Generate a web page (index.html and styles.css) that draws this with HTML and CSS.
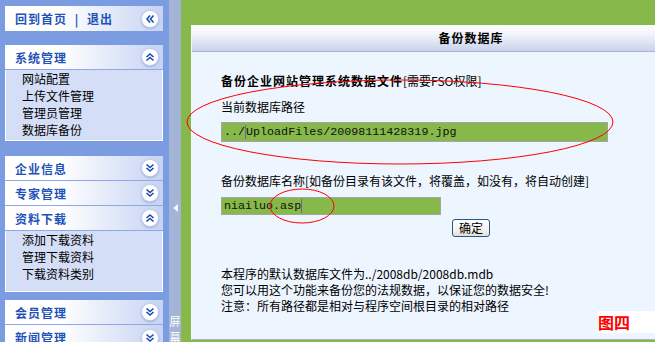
FILE: index.html
```html
<!DOCTYPE html>
<html lang="zh-CN">
<head>
  <meta charset="UTF-8">
  <title>备份数据库</title>
  <link rel="stylesheet" href="styles.css">
</head>
<body>

  <div class="page">
    <!-- left menu -->
    <div class="sidebar">
      <div class="menu-head menu-top">
        <span class="head-title">回到首页 <span class="sep">|</span> 退出</span>
        <span class="toggle">
          <svg viewBox="0 0 16 16"><path d="M8 4.5L5 8l3 3.5M11.5 4.5L8.5 8l3 3.5"/></svg>
        </span>
      </div>

      <div class="menu-group">
        <div class="menu-head">
          <span class="head-title">系统管理</span>
          <span class="toggle">
            <svg viewBox="0 0 16 16"><path d="M4.5 8L8 5l3.5 3M4.5 11.5L8 8.5l3.5 3"/></svg>
          </span>
        </div>
        <div class="menu-list">
          <div class="menu-item">网站配置</div>
          <div class="menu-item">上传文件管理</div>
          <div class="menu-item">管理员管理</div>
          <div class="menu-item">数据库备份</div>
        </div>
      </div>

      <div class="menu-group">
        <div class="menu-head">
          <span class="head-title">企业信息</span>
          <span class="toggle">
            <svg viewBox="0 0 16 16"><path d="M4.5 4.5L8 7.5l3.5-3M4.5 8L8 11l3.5-3"/></svg>
          </span>
        </div>
        <div class="menu-head">
          <span class="head-title">专家管理</span>
          <span class="toggle">
            <svg viewBox="0 0 16 16"><path d="M4.5 4.5L8 7.5l3.5-3M4.5 8L8 11l3.5-3"/></svg>
          </span>
        </div>
        <div class="menu-head">
          <span class="head-title">资料下载</span>
          <span class="toggle">
            <svg viewBox="0 0 16 16"><path d="M4.5 8L8 5l3.5 3M4.5 11.5L8 8.5l3.5 3"/></svg>
          </span>
        </div>
        <div class="menu-list menu-list-tall">
          <div class="menu-item">添加下载资料</div>
          <div class="menu-item">管理下载资料</div>
          <div class="menu-item">下载资料类别</div>
        </div>
      </div>

      <div class="menu-group menu-group-last">
        <div class="menu-head">
          <span class="head-title">会员管理</span>
          <span class="toggle">
            <svg viewBox="0 0 16 16"><path d="M4.5 4.5L8 7.5l3.5-3M4.5 8L8 11l3.5-3"/></svg>
          </span>
        </div>
        <div class="menu-head">
          <span class="head-title">新闻管理</span>
          <span class="toggle">
            <svg viewBox="0 0 16 16"><path d="M4.5 4.5L8 7.5l3.5-3M4.5 8L8 11l3.5-3"/></svg>
          </span>
        </div>
      </div>
    </div>

    <!-- splitter strip -->
    <div class="splitter">
      <span class="arrow-left"></span>
      <span class="screen-label">屏</span>
      <span class="screen-label">幕</span>
    </div>

    <!-- main area -->
    <div class="main-wrap">
      <div class="main-panel">
        <div class="panel-head">备份数据库</div>
        <div class="panel-body">
          <div class="form-title"><b>备份企业网站管理系统数据文件</b>[需要FSO权限]</div>
          <div class="field-label">当前数据库路径</div>
          <div class="text-input input-long">../<span class="caret"></span>UploadFiles/20098111428319.jpg</div>

          <div class="field-label field-label-gap">备份数据库名称[如备份目录有该文件，将覆盖，如没有，将自动创建]</div>
          <div class="text-input input-short">niailuo.asp<span class="caret"></span></div>
          <button class="btn-ok">确定</button>

          <div class="notes">
            <div class="note">本程序的默认数据库文件为../2008db/2008db.mdb</div>
            <div class="note">您可以用这个功能来备份您的法规数据，以保证您的数据安全!</div>
            <div class="note">注意：所有路径都是相对与程序空间根目录的相对路径</div>
          </div>
        </div>
      </div>
    </div>
  </div>

  <!-- annotations drawn on top of the screenshot -->
  <svg class="marks" viewBox="0 0 655 342">
    <ellipse cx="400" cy="122" rx="213" ry="42" />
    <ellipse cx="302" cy="206" rx="32" ry="17" />
  </svg>
  <div class="fig-label">图四</div>

</body>
</html>
```

FILE: styles.css
```css
body {
  margin: 0;
  width: 655px;
  height: 342px;
  overflow: hidden;
  position: relative;
  font-family: "Noto Sans CJK SC", "Liberation Sans", sans-serif;
  font-size: 12px;
  color: #000;
}

.page {
  display: flex;
  height: 342px;
}

/* ---- sidebar ---- */

.sidebar {
  width: 164px;
  flex-shrink: 0;
  background: #7b9ce1;
  padding: 6px 0 0 5px;
  display: flex;
  flex-direction: column;
}

.menu-head {
  width: 158px;
  height: 25px;
  flex-shrink: 0;
  box-sizing: border-box;
  display: flex;
  align-items: center;
  justify-content: space-between;
  padding: 0 5px 0 10px;
  background: linear-gradient(to right, #ffffff 0%, #ffffff 35%, #c6d3f3 100%);
  border-bottom: 1px solid #8fa8e6;
}

.menu-head:last-child {
  border-bottom: none;
}

.menu-top {
  margin-bottom: 14px;
  border-bottom: none;
}

.head-title {
  color: #1f52b8;
  font-weight: bold;
  font-size: 12px;
  letter-spacing: 1px;
  line-height: 25px;
}

.sep {
  margin: 0 4px;
}

.toggle {
  width: 16px;
  height: 16px;
  border-radius: 50%;
  background: #fff;
  box-shadow: 0 0 0 1px #c3cfee, 0 1px 3px rgba(50, 70, 140, 0.55);
  display: flex;
  align-items: center;
  justify-content: center;
}

.toggle svg {
  width: 16px;
  height: 16px;
  fill: none;
  stroke: #1c4cae;
  stroke-width: 1.6;
}

.menu-group {
  margin-bottom: 15px;
}

.menu-group-last {
  margin-top: -7px;
}

.menu-list {
  width: 158px;
  box-sizing: border-box;
  background: #d5def7;
  border: 1px solid #fff;
  border-top: none;
  padding: 0 0 2px 16px;
}

.menu-list-tall {
  padding-bottom: 9px;
}

.menu-item {
  line-height: 17px;
  height: 17px;
}

/* ---- splitter ---- */

.splitter {
  width: 12px;
  flex-shrink: 0;
  background: #a3b4d6;
  display: flex;
  flex-direction: column;
  align-items: center;
}

.arrow-left {
  margin-top: 204px;
  width: 0;
  height: 0;
  border-top: 4px solid transparent;
  border-bottom: 4px solid transparent;
  border-right: 5px solid #f4f7ff;
}

.screen-label {
  color: #fff;
  font-size: 11px;
  line-height: 16px;
  height: 16px;
  flex-shrink: 0;
}

.arrow-left + .screen-label {
  margin-top: 101px;
}

/* ---- main ---- */

.main-wrap {
  flex: 1;
  background: #86b84a;
  padding: 25px 0 0 10px;
  overflow: hidden;
}

.main-panel {
  width: 558px;
  height: 314px;
  background: #edf5fe;
  border-left: 1px solid #f4f8ff;
  border-bottom: 1px solid #a3b4d6;
}

.panel-head {
  height: 26px;
  line-height: 26px;
  text-align: center;
  font-weight: bold;
  font-size: 12px;
  letter-spacing: 1px;
  background: linear-gradient(to bottom, #ffffff 0%, #f1f4fb 35%, #c9d3ea 100%);
  border-bottom: 1px solid #a3b4d6;
}

.panel-body {
  padding: 21px 0 0 29px;
}

.form-title {
  line-height: 16px;
}

.form-title b {
  letter-spacing: 1px;
}

.field-label {
  margin-top: 10px;
  line-height: 16px;
}

.field-label-gap {
  margin-top: 31px;
}

.text-input {
  box-sizing: border-box;
  background: #86b84a;
  border: 1px solid #a5a5a5;
  font-family: "Liberation Mono", "DejaVu Sans Mono", monospace;
  font-size: 11.7px;
  color: #111;
  padding-left: 2px;
  display: flex;
  align-items: center;
}

.input-long {
  width: 387px;
  height: 20px;
  margin-top: 7px;
}

.input-short {
  width: 220px;
  height: 18px;
  margin-top: 8px;
}

.caret {
  display: inline-block;
  width: 1px;
  height: 14px;
  background: #6a6a9a;
}

.btn-ok {
  display: block;
  margin: 4px 0 0 231px;
  width: 38px;
  height: 18px;
  padding: 0;
  font-family: "Noto Sans CJK SC", sans-serif;
  font-size: 12px;
  line-height: 16px;
  color: #000;
  background: linear-gradient(to bottom, #ffffff 0%, #f4f3ee 60%, #e3e1d6 100%);
  border: 1px solid #2a5590;
  border-radius: 3px;
}

.notes {
  margin-top: 29px;
}

.note {
  height: 16px;
  line-height: 16px;
}

/* ---- annotations ---- */

.marks {
  position: absolute;
  left: 0;
  top: 0;
  width: 655px;
  height: 342px;
  pointer-events: none;
}

.marks ellipse {
  fill: none;
  stroke: #ff0000;
  stroke-width: 1;
}

.fig-label {
  position: absolute;
  left: 598px;
  top: 311px;
  width: 57px;
  height: 22px;
  background: #fff;
  color: #ff0000;
  font-weight: bold;
  font-size: 16px;
  line-height: 22px;
}
```
